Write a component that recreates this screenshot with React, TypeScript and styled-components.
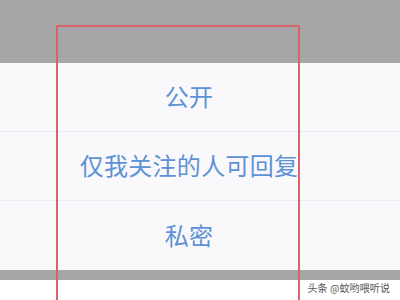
import React from 'react';
import styled, { createGlobalStyle } from 'styled-components';

const GlobalStyle = createGlobalStyle`
  html, body {
    margin: 0;
    padding: 0;
    width: 400px;
    height: 300px;
    overflow: hidden;
    font-family: "Noto Sans CJK SC", "Noto Sans", sans-serif;
  }
`;

const Screen = styled.div`
  position: relative;
  width: 400px;
  height: 300px;
  display: flex;
  flex-direction: column;
  background-color: #fbfbfc;
  overflow: hidden;
`;

const Dim = styled.div<{ h: number }>`
  height: ${props => props.h}px;
  flex-shrink: 0;
  background-color: #a6a5a8;
`;

const Sheet = styled.div`
  display: flex;
  flex-direction: column;
  background-color: #f9f8fb;
`;

const Option = styled.div<{ last?: boolean }>`
  height: 69px;
  display: flex;
  align-items: center;
  justify-content: center;
  padding-right: 22px;
  padding-bottom: 3px;
  box-sizing: border-box;
  border-bottom: ${props => (props.last ? 'none' : '1px solid #ecebef')};
  color: #5d92d6;
  font-size: 24px;
  font-weight: 400;
  letter-spacing: 0.3px;
`;

const Footer = styled.div`
  flex: 1;
  display: flex;
  justify-content: flex-end;
  align-items: center;
  padding-right: 10px;
  padding-bottom: 6px;
  background-color: #ffffff;
`;

const Watermark = styled.span`
  font-size: 10px;
  color: #555555;
  letter-spacing: 0.1px;
`;

const Highlight = styled.div`
  position: absolute;
  left: 56px;
  top: 25px;
  width: 240px;
  height: 290px;
  border: 2px solid #d9626b;
  pointer-events: none;
`;

const options = ['公开', '仅我关注的人可回复', '私密'];

export default function App() {
  return (
    <Screen>
      <GlobalStyle />
      <Dim h={63} />
      <Sheet>
        {options.map((label, i) => (
          <Option key={label} last={i === options.length - 1}>
            {label}
          </Option>
        ))}
      </Sheet>
      <Dim h={10} />
      <Footer>
        <Watermark>头条 @蚊哟喂听说</Watermark>
      </Footer>
      <Highlight />
    </Screen>
  );
}
